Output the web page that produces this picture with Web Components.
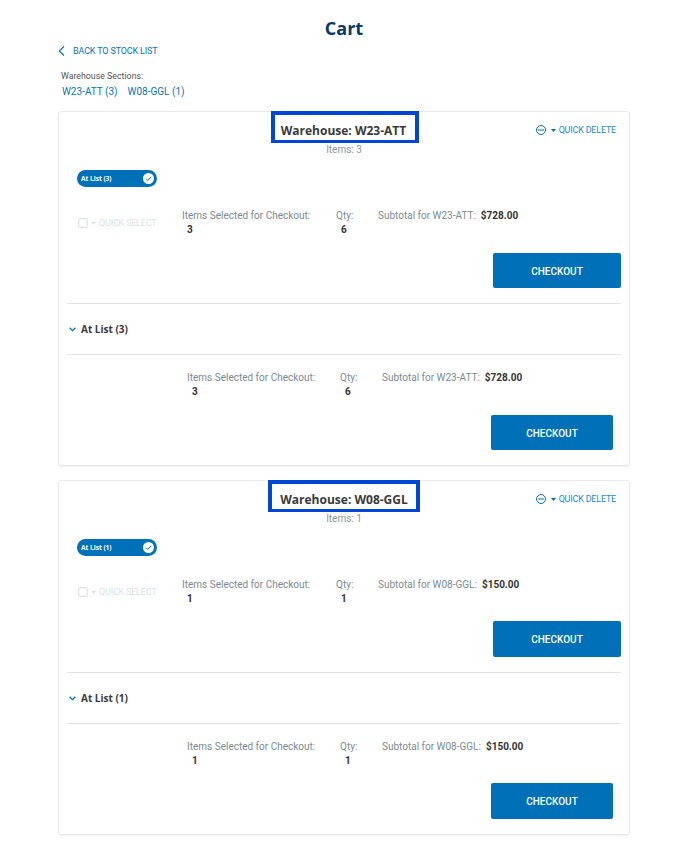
<!DOCTYPE html>
<html lang="en">
<head>
<meta charset="utf-8">
<title>Cart</title>
<style>
  html, body { margin: 0; background: #fff; }
  body { font-family: Roboto, sans-serif; color: #333; }
</style>
</head>
<body>
<cart-page>
  <warehouse-card code="W23-ATT" items="3" qty="6" total="$728.00" btn-h="35" btn-pad="1px" box-pad="7px 9px 0 6px" box-shift="2px"></warehouse-card>
  <warehouse-card code="W08-GGL" items="1" qty="1" total="$150.00" btn-h="36" btn-pad="0" box-pad="7px 8px 0 8px" box-shift="0"></warehouse-card>
</cart-page>

<script>
(() => {
  const BLUE = '#0070b8';

  class CartPage extends HTMLElement {
    constructor() {
      super();
      this.attachShadow({ mode: 'open' }).innerHTML = `
        <style>
          :host { display: block; padding: 0 69px 11px 58px; }
          h1 { margin: 0; padding-top: 16px; height: 28px; text-align: center;
               font: 700 18px/25px "Open Sans", sans-serif; color: #053a63; }
          .back { display: flex; align-items: center; gap: 8px; height: 14px;
                  font-size: 9px; color: #0b74b5; letter-spacing: -.15px; }
          .sections { padding: 12px 0 0 3px; font-size: 8.8px; color: #555; line-height: 12px; height: 53px; box-sizing: border-box; }
          .links { display: flex; gap: 10px; margin-top: 3px; padding-left: 1px; font-size: 10px; line-height: 14px; color: #0b74b5; }
          ::slotted(warehouse-card) { margin-bottom: 14px; }
        </style>
        <h1>Cart</h1>
        <div class="back">
          <svg width="7" height="10" viewBox="0 0 7 10" fill="none" stroke="${BLUE}" stroke-width="1.1"><path d="M6 .5 1.2 5 6 9.5"/></svg>
          <span>BACK TO STOCK LIST</span>
        </div>
        <div class="sections">
          Warehouse Sections:
          <div class="links"><span>W23-ATT (3)</span><span>W08-GGL (1)</span></div>
        </div>
        <slot></slot>`;
    }
  }

  class SummaryRow extends HTMLElement {
    constructor() {
      super();
      const a = n => this.getAttribute(n);
      this.attachShadow({ mode: 'open' }).innerHTML = `
        <style>
          :host { display: grid; grid-template-columns: var(--cols); font-size: 10px; line-height: 14px; color: #7c8a92; }
          b { display: block; font-weight: 700; color: #333; padding-left: 5px; }
          .sub { display: flex; gap: 5px; }
          .sub b { padding: 0; }
        </style>
        <div><slot></slot></div>
        <div>Items Selected for Checkout:<b>${a('items')}</b></div>
        <div>Qty:<b>${a('qty')}</b></div>
        <div class="sub"><span>Subtotal for ${a('code')}:</span><b>${a('total')}</b></div>`;
    }
  }

  class CheckoutButton extends HTMLElement {
    constructor() {
      super();
      this.attachShadow({ mode: 'open' }).innerHTML = `
        <style>
          :host { display: flex; align-items: center; justify-content: center; box-sizing: border-box;
                  background: ${BLUE}; color: #fff; border-radius: 2px; font-size: 10px; font-weight: 500; }
        </style>
        <slot></slot>`;
    }
  }

  class WarehouseCard extends HTMLElement {
    constructor() {
      super();
      const a = n => this.getAttribute(n);
      const btnH = a('btn-h') + 'px';
      this.attachShadow({ mode: 'open' }).innerHTML = `
        <style>
          :host { display: block; height: 355px; box-sizing: border-box; border: 1px solid #e6e8e9; border-radius: 3px;
                  box-shadow: 0 1px 2px rgba(0,0,0,.06); padding: 0 8px; position: relative; }
          .head { display: flex; justify-content: center; }
          .box { height: 32px; box-sizing: border-box; border: 4px solid #0047d6; border-bottom-width: 3px; margin-top: -1px;
                 font: 700 12px/18px "Open Sans", sans-serif; color: #3a3a3a; white-space: nowrap; }
          .count { text-align: center; font-size: 10px; line-height: 14px; color: #8b979e; }
          .toggle { display: flex; align-items: center; justify-content: space-between; width: 80px; height: 17px;
                    margin: 13px 0 0 10px; padding: 0 3px 0 4px; box-sizing: border-box; border-radius: 9px;
                    background: ${BLUE}; color: #fff; font: 700 6.5px/17px "Open Sans", sans-serif; }
          .row1 { --cols: 104px 154px 42px 1fr; margin: 22px 0 0 11px; }
          .quick { display: flex; align-items: center; gap: 3px; color: #dde1e3; font-size: 9px; height: 14px; margin-top: 7px; letter-spacing: -.2px; }
          .actions { display: flex; justify-content: flex-end; align-items: flex-end; height: 51px; }
          .actions checkout-button { width: 128px; height: ${btnH}; padding-top: ${a('btn-pad')}; }
          hr { border: 0; border-top: 1px solid #dfe3e4; margin: 0; }
          .group { display: flex; align-items: center; gap: 5px; height: 50px; padding-left: 2px;
                   font: 700 10px/14px "Open Sans", sans-serif; color: #3a3a3a; }
          .row2 { --cols: 120px 153px 42px 1fr; margin: 16px 0 0 0; }
          .actions2 { display: flex; justify-content: flex-end; align-items: flex-end; height: 51px; padding-right: 8px; }
          .actions2 checkout-button { width: 122px; height: ${btnH}; padding-top: ${a('btn-pad')}; }
          .del { position: absolute; top: 13px; right: 13px; display: flex; align-items: center;
                 font-size: 9px; color: #1a8ccf; letter-spacing: -.2px; }
          .del .minus { margin-right: 5px; }
          .del .caret { margin-right: 3px; }
          .gap1 { height: 15px; }
        </style>
        <div class="head"><div class="box" style="padding:${a('box-pad')};margin-left:${a('box-shift')}">Warehouse: ${a('code')}</div></div>
        <div class="del">
          <svg class="minus" width="10" height="10" viewBox="0 0 10 10" fill="none" stroke="${BLUE}"><circle cx="5" cy="5" r="4.5"/><path d="M2 5h6"/></svg>
          <svg class="caret" width="5" height="3" viewBox="0 0 5 3" fill="${BLUE}"><path d="M0 0h5L2.5 3z"/></svg>
          <span>QUICK DELETE</span>
        </div>
        <div class="count">Items: ${a('items')}</div>
        <div class="toggle">
          <span>At List (${a('items')})</span>
          <svg width="11" height="11" viewBox="0 0 11 11"><circle cx="5.5" cy="5.5" r="5.5" fill="#fff"/><path d="M3 5.6l1.8 1.8L8.2 3.8" fill="none" stroke="${BLUE}" stroke-width="1"/></svg>
        </div>
        <summary-row class="row1" items="${a('items')}" qty="${a('qty')}" code="${a('code')}" total="${a('total')}">
          <div class="quick">
            <svg width="10" height="10" viewBox="0 0 10 10" fill="none" stroke="#dfe2e3" stroke-width="1.2"><rect x=".7" y=".7" width="8.6" height="8.6" rx="1.5"/></svg>
            <svg width="5" height="3" viewBox="0 0 5 3" fill="#dfe2e3"><path d="M0 0h5L2.5 3z"/></svg>
            <span>QUICK SELECT</span>
          </div>
        </summary-row>
        <div class="actions"><checkout-button>CHECKOUT</checkout-button></div>
        <div class="gap1"></div>
        <hr>
        <div class="group">
          <svg width="7" height="5" viewBox="0 0 7 5" fill="none" stroke="${BLUE}" stroke-width="1.3"><path d="M.6.8 3.5 3.7 6.4.8"/></svg>
          <span>At List (${a('items')})</span>
        </div>
        <hr>
        <summary-row class="row2" items="${a('items')}" qty="${a('qty')}" code="${a('code')}" total="${a('total')}"></summary-row>
        <div class="actions2"><checkout-button>CHECKOUT</checkout-button></div>`;
    }
  }

  customElements.define('summary-row', SummaryRow);
  customElements.define('checkout-button', CheckoutButton);
  customElements.define('warehouse-card', WarehouseCard);
  customElements.define('cart-page', CartPage);
})();
</script>
</body>
</html>
